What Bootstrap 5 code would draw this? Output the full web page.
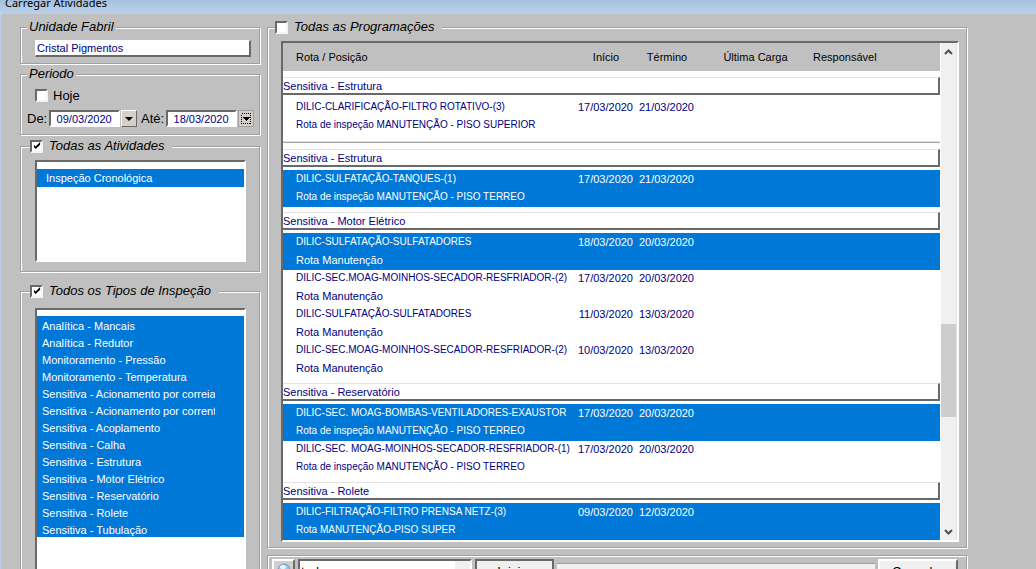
<!DOCTYPE html>
<html lang="pt-BR">
<head>
<meta charset="utf-8">
<meta name="viewport" content="width=device-width, initial-scale=1">
<title>Carregar Atividades</title>
<link rel="stylesheet" href="https://cdn.jsdelivr.net/npm/bootstrap@5.3.0/dist/css/bootstrap.min.css">
<style>
:root{--face:#c0c0c0;--etch:#a0a0a0;--dark:#696969;--light:#e3e3e3;--sel:#0078d7;--navy:#000080}
html,body{height:100vh;overflow:hidden}
body{background:var(--face);font-family:"Liberation Sans",Arial,sans-serif;font-size:11px;line-height:18px;color:#000}
.titlebar{height:14px;background:linear-gradient(#a6c1de,#bad1ea);font-family:"Noto Sans",sans-serif;font-size:11px;line-height:6px;padding:0 5px}
.workarea{border-left:1px solid #b9d1ea;padding:5px 68px 0 19px;gap:6px;min-height:100vh}
.sidecol{width:241px}
.etched{border:1px solid var(--etch);box-shadow:1px 1px 0 #fff,inset 1px 1px 0 #fff;margin:0 1px 0 0;min-width:0}
.etched>legend{float:none;width:auto;background:var(--face);font-size:13px;line-height:16px;height:16px;font-style:italic;margin:0 0 0 6px;padding:0 2px}
.etched>legend.with-check{display:flex;align-items:center;margin-left:9px;padding:0 8px 0 0;gap:6px}
.etched>legend.wide-check{margin-left:7px}
.tick{appearance:none;flex:none;width:13px;height:13px;margin:0;background:#fff center/8px 8px no-repeat;border:2px solid;border-color:var(--dark) #f4f4f4 #f4f4f4 var(--dark)}
.tick:checked{background-image:url("data:image/svg+xml,%3Csvg xmlns='http://www.w3.org/2000/svg' viewBox='0 0 9 9'%3E%3Cpath d='M1 3v3l2 2 5-5V0L3 5z'/%3E%3C/svg%3E")}
.field{border:2px solid;border-radius:0;background:#fff;color:var(--navy);font-size:11px;line-height:14px;height:17px;padding:0;min-width:0}
.field-raised{border-color:#fff var(--dark) var(--dark) #fff;border-width:1px 2px 2px 1px;padding:0 1px}
.field-sunken{border-color:var(--dark) #fff #fff var(--dark);text-align:center;width:71px}
.caption{font-size:13px;line-height:16px}
.today{height:13px;gap:5px;padding-left:8px}
.unit{padding:5px 8px 6px 14px}
.period{padding:7px 5px 7px 6px}
.acts-box{padding:6px 13px 9px 14px}
.types-box{padding:9px 13px 9px 14px}
.gap-a{margin-top:2px}.gap-b{margin-top:3px}.gap-c{margin-top:11px}
.drop{display:flex;align-items:center;justify-content:center;flex:none;width:16px;height:17px;padding:0;border:1px solid;border-color:#fff var(--dark) var(--dark) #fff;background:#d4d0c8}
.drop.focused{border-color:var(--etch)}
.sunken{border:2px solid;border-color:var(--dark) #fff #fff var(--dark);background:#fff}
.options{list-style:none;margin:0}
.options li{background:var(--sel);color:#fff;line-height:20px;height:17px;padding-left:5px}
.options span{display:block;overflow:hidden;white-space:nowrap;max-width:173px}
.options.acts{height:102px;padding:7px 0 0}
.acts li{height:18px;line-height:18px;padding-left:9px}
.options.types{min-height:290px;padding:6px 0 0}
.plan{padding:6px 7px 5px 13px}
.grid-pane{padding-bottom:1px}
.grid-table{table-layout:fixed;border-collapse:separate;border-spacing:0;width:100%;color:var(--navy)}
.grid-table th,.grid-table td{font-weight:400;padding:0;height:18px;line-height:18px;white-space:nowrap;text-align:left}
.grid-table thead th{background:var(--face);color:#000;height:28px;line-height:28px}
.grid-table thead th.mid{text-align:center}
.grid-table td:first-child,.grid-table thead th:first-child{padding-left:13px}
.grid-table .caps{font-size:10px}
.grid-table td.date{text-align:right;padding-right:3px}
.grid-table td.date+td.date{padding-right:4px}
.grid-table .picked td{background:var(--sel);color:#fff;box-shadow:0 1px 0 var(--sel)}
.grid-table .rule td{height:9px;line-height:0;border-bottom:1px solid var(--etch);box-shadow:inset 0 -1px 0 var(--light)}
.grid-table .band{height:27px;padding:6px 0 3px}
.band div{height:18px;line-height:17px;border:1px solid;border-width:1px 2px 2px 0;border-color:var(--light) var(--dark) var(--dark)}
.c-name{width:293px}.c-start{width:60px}.c-end{width:62px}.c-load{width:115px}
.scroller{width:17px;background:#f0f0f0;border-left:1px solid #fff;border-right:1px solid var(--light)}
.scroller svg{margin:5px 3px}
.thumb{height:93px;margin-bottom:105px;background:#cdcdcd}
.toolgroup{margin-top:7px}
.toolrow{padding:3px 8px 10px 4px;gap:3px}
.tool{flex:none;border:2px solid;border-color:#fff var(--dark) var(--dark) #fff;background:#f0f0f0;font-size:13px;line-height:16px;height:26px;padding:0;color:#000}
.tool-find{width:23px;background:#d0d0d0}
.tool-start{width:79px;border-color:var(--dark)}
.tool-cancel{width:80px}
.combo{appearance:none;flex:none;width:174px;height:26px;border-radius:0;padding:0 1px;font-size:13px;color:#000;background:linear-gradient(#f0f0f0,#f0f0f0) right/15px 100% no-repeat #fff}
.well{height:24px;background:#f0f0f0;border-top:1px solid var(--etch)}
</style>
</head>
<body>
<header class="titlebar">Carregar Atividades</header>
<main class="workarea d-flex align-items-start">
  <form class="sidecol flex-shrink-0">
    <fieldset class="etched">
      <legend>Unidade Fabril</legend>
      <div class="unit d-flex"><input class="field field-raised w-100" aria-label="Unidade Fabril" value="Cristal Pigmentos"></div>
    </fieldset>
    <fieldset class="etched gap-a">
      <legend>Periodo</legend>
      <div class="period d-flex flex-column gap-2">
        <label class="today caption d-flex align-items-center"><input type="checkbox" class="tick">Hoje</label>
        <div class="d-flex align-items-center">
          <label class="caption" for="de">De:</label>
          <input id="de" class="field field-sunken ms-auto" value="09/03/2020">
          <button type="button" class="drop ms-auto" aria-label="Escolher data inicial"><svg width="8" height="4"><path d="M0 0h8L4 4z"/></svg></button>
          <label class="caption ms-1" for="ate">Até:</label>
          <input id="ate" class="field field-sunken ms-auto" value="18/03/2020">
          <button type="button" class="drop focused ms-auto" aria-label="Escolher data final"><svg width="10" height="11" shape-rendering="crispEdges"><rect x=".5" y=".5" width="9" height="10" fill="none" stroke="#000" stroke-dasharray="1 1"/><path d="M1 4h8L5 8z"/></svg></button>
        </div>
      </div>
    </fieldset>
    <fieldset class="etched gap-b">
      <legend class="with-check"><input type="checkbox" class="tick" id="todas-atv" checked><label for="todas-atv">Todas as Atividades</label></legend>
      <div class="acts-box"><ul class="options sunken acts"><li>Inspeção Cronológica</li></ul></div>
    </fieldset>
    <fieldset class="etched gap-c">
      <legend class="with-check"><input type="checkbox" class="tick" id="todos-tipos" checked><label for="todos-tipos">Todos os Tipos de Inspeção</label></legend>
      <div class="types-box"><ul class="options sunken types">
        <li><span>Analítica - Mancais</span></li>
        <li><span>Analítica - Redutor</span></li>
        <li><span>Monitoramento - Pressão</span></li>
        <li><span>Monitoramento - Temperatura</span></li>
        <li><span>Sensitiva - Acionamento por correia</span></li>
        <li><span>Sensitiva - Acionamento por corrent</span></li>
        <li><span>Sensitiva - Acoplamento</span></li>
        <li><span>Sensitiva - Calha</span></li>
        <li><span>Sensitiva - Estrutura</span></li>
        <li><span>Sensitiva - Motor Elétrico</span></li>
        <li><span>Sensitiva - Reservatório</span></li>
        <li><span>Sensitiva - Rolete</span></li>
        <li><span>Sensitiva - Tubulação</span></li>
      </ul></div>
    </fieldset>
  </form>
  <section class="flex-fill">
    <fieldset class="etched">
      <legend class="with-check wide-check"><input type="checkbox" class="tick" id="todas-prog"><label for="todas-prog">Todas as Programações</label></legend>
      <div class="plan"><div class="sunken d-flex">
        <div class="grid-pane flex-fill">
        <table class="grid-table">
          <colgroup><col class="c-name"><col class="c-start"><col class="c-end"><col class="c-load"><col></colgroup>
          <thead><tr><th>Rota / Posição</th><th class="mid">Início</th><th class="mid">Término</th><th class="mid">Última Carga</th><th>Responsável</th></tr></thead>
          <tbody>
            <tr><th colspan="5" class="band"><div>Sensitiva - Estrutura</div></th></tr>
            <tr><td class="caps">DILIC-CLARIFICAÇÃO-FILTRO ROTATIVO-(3)</td><td class="date">17/03/2020</td><td class="date">21/03/2020</td><td></td><td></td></tr>
            <tr><td class="caps" colspan="5">Rota de inspeção MANUTENÇÃO - PISO SUPERIOR</td></tr>
            <tr class="rule"><td colspan="5"></td></tr>
          </tbody>
          <tbody>
            <tr><th colspan="5" class="band"><div>Sensitiva - Estrutura</div></th></tr>
            <tr class="picked"><td class="caps">DILIC-SULFATAÇÃO-TANQUES-(1)</td><td class="date">17/03/2020</td><td class="date">21/03/2020</td><td></td><td></td></tr>
            <tr class="picked"><td class="caps" colspan="5">Rota de inspeção MANUTENÇÃO - PISO TERREO</td></tr>
          </tbody>
          <tbody>
            <tr><th colspan="5" class="band"><div>Sensitiva - Motor Elétrico</div></th></tr>
            <tr class="picked"><td class="caps">DILIC-SULFATAÇÃO-SULFATADORES</td><td class="date">18/03/2020</td><td class="date">20/03/2020</td><td></td><td></td></tr>
            <tr class="picked"><td colspan="5">Rota Manutenção</td></tr>
            <tr><td class="caps">DILIC-SEC.MOAG-MOINHOS-SECADOR-RESFRIADOR-(2)</td><td class="date">17/03/2020</td><td class="date">20/03/2020</td><td></td><td></td></tr>
            <tr><td colspan="5">Rota Manutenção</td></tr>
            <tr><td class="caps">DILIC-SULFATAÇÃO-SULFATADORES</td><td class="date">11/03/2020</td><td class="date">13/03/2020</td><td></td><td></td></tr>
            <tr><td colspan="5">Rota Manutenção</td></tr>
            <tr><td class="caps">DILIC-SEC.MOAG-MOINHOS-SECADOR-RESFRIADOR-(2)</td><td class="date">10/03/2020</td><td class="date">13/03/2020</td><td></td><td></td></tr>
            <tr><td colspan="5">Rota Manutenção</td></tr>
          </tbody>
          <tbody>
            <tr><th colspan="5" class="band"><div>Sensitiva - Reservatório</div></th></tr>
            <tr class="picked"><td class="caps">DILIC-SEC. MOAG-BOMBAS-VENTILADORES-EXAUSTOR</td><td class="date">17/03/2020</td><td class="date">20/03/2020</td><td></td><td></td></tr>
            <tr class="picked"><td class="caps" colspan="5">Rota de inspeção MANUTENÇÃO - PISO TERREO</td></tr>
            <tr><td class="caps">DILIC-SEC. MOAG-MOINHOS-SECADOR-RESFRIADOR-(1)</td><td class="date">17/03/2020</td><td class="date">20/03/2020</td><td></td><td></td></tr>
            <tr><td class="caps" colspan="5">Rota de inspeção MANUTENÇÃO - PISO TERREO</td></tr>
          </tbody>
          <tbody>
            <tr><th colspan="5" class="band"><div>Sensitiva - Rolete</div></th></tr>
            <tr class="picked"><td class="caps">DILIC-FILTRAÇÃO-FILTRO PRENSA NETZ-(3)</td><td class="date">09/03/2020</td><td class="date">12/03/2020</td><td></td><td></td></tr>
            <tr class="picked"><td class="caps" colspan="5">Rota MANUTENÇÃO-PISO SUPER</td></tr>
          </tbody>
        </table>
        </div>
        <div class="scroller flex-shrink-0 d-flex flex-column">
          <svg width="9" height="9" fill="none" stroke="#505050" stroke-width="2"><path d="M1 6l3.500-3.500L8 6"/></svg>
          <div class="thumb mt-auto"></div>
          <svg class="mb-1" width="9" height="9" fill="none" stroke="#505050" stroke-width="2"><path d="M1 3l3.500 3.500L8 3"/></svg>
        </div>
      </div></div>
    </fieldset>
    <div class="etched toolgroup">
      <div class="toolrow d-flex">
        <button type="button" class="tool tool-find" aria-label="Pesquisar"><svg width="17" height="20" class="d-block"><circle cx="10" cy="8" r="6" fill="#9cc4ec" stroke="#6f94c4"/><ellipse cx="9" cy="5" rx="3" ry="2" fill="#eaf5ff"/><path d="M6 12l-5 6" stroke="#555" stroke-width="2"/></svg></button>
        <select class="field field-sunken combo text-start" aria-label="Filtro"><option>todos</option></select>
        <button type="button" class="tool tool-start">Iniciar</button>
        <div class="well flex-fill mt-1"></div>
        <button type="button" class="tool tool-cancel">Cancelar</button>
      </div>
    </div>
  </section>
</main>
<script src="https://cdn.jsdelivr.net/npm/bootstrap@5.3.0/dist/js/bootstrap.bundle.min.js"></script>
</body>
</html>
